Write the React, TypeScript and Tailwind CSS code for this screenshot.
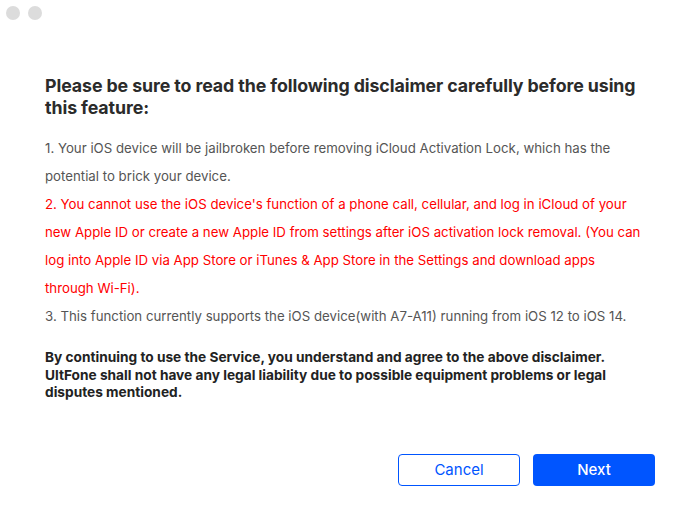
export default function App() {
  return (
    <div
      className="w-[700px] h-[514px] bg-white flex flex-col overflow-hidden"
      style={{ fontFamily: 'Inter, "Noto Sans", sans-serif' }}
    >
      {/* window controls */}
      <div className="flex gap-[8px] pl-[6px] pt-[6px]">
        <span className="w-[14px] h-[14px] rounded-full bg-[#dcdcdc]" />
        <span className="w-[14px] h-[14px] rounded-full bg-[#dcdcdc]" />
      </div>

      <div className="flex flex-col px-[45px] pt-[55px]">
        <h1 className="text-[17.8px] leading-[22px] font-bold text-[#2b2b2b] tracking-[-0.1px]">
          Please be sure to read the following disclaimer carefully before using this feature:
        </h1>

        <div className="mt-[15px] text-[13.25px] leading-[28px] text-[#555555]">
          <p>
            1. Your iOS device will be jailbroken before removing iCloud Activation Lock, which has the
            potential to brick your device.
          </p>
          <p className="text-[#ff0000] pr-[9px]">
            2. You cannot use the iOS device's function of a phone call, cellular, and log in iCloud of your
            new Apple ID or create a new Apple ID from settings after iOS activation lock removal. (You can
            log into Apple ID via App Store or iTunes &amp; App Store in the Settings and download apps
            through Wi-Fi).
          </p>
          <p>3. This function currently supports the iOS device(with A7-A11) running from iOS 12 to iOS 14.</p>
        </div>

        <p className="mt-[19px] text-[13.7px] leading-[17.5px] font-bold text-[#222222]">
          By continuing to use the Service, you understand and agree to the above disclaimer. UltFone shall
          not have any legal liability due to possible equipment problems or legal disputes mentioned.
        </p>
      </div>

      <div className="mt-auto mb-[28px] flex justify-end gap-[13px] pr-[45px]">
        <button className="w-[122px] h-[32px] rounded-[4px] border border-[#0055ff] bg-white text-[#0055ff] text-[15px]">
          Cancel
        </button>
        <button className="w-[122px] h-[32px] rounded-[4px] bg-[#0055ff] text-white text-[15px] font-medium">
          Next
        </button>
      </div>
    </div>
  );
}
